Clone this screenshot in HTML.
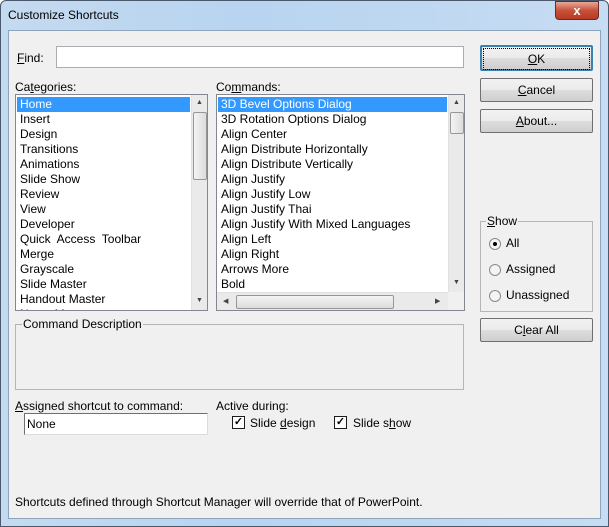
<!DOCTYPE html>
<html><head><style>
*{box-sizing:border-box;margin:0;padding:0}
body{width:609px;height:527px;overflow:hidden;background:#fff;font-family:"Liberation Sans",sans-serif;font-size:12px;color:#000;position:relative}
.frame{position:absolute;left:0;top:0;width:609px;height:527px;background:linear-gradient(90deg,#c4daf0,#b8d4f0 40%,#c6dcf2);border:1px solid #4a5a6c;border-radius:6px 6px 0 0}
.client{position:absolute;left:8px;top:30px;width:593px;height:489px;background:#f0f0f0;border:1px solid #8ea4bc}
.title{position:absolute;left:8px;top:8px;font-size:12px}
.close{position:absolute;left:555px;top:1px;width:44px;height:19px;border:1px solid #6a2a22;border-radius:0 0 4px 4px;background:linear-gradient(#e8a898,#c8503a 50%,#b83a22);color:#fff;font-weight:bold;text-align:center;font-size:13px;line-height:17px}
.a{position:absolute;white-space:nowrap}
.inp{position:absolute;background:#fff;border:1px solid #abadb3}
.btn{position:absolute;border:1px solid #707070;border-radius:2px;background:linear-gradient(#f2f2f2,#ebebeb 50%,#dddddd 51%,#cfcfcf);text-align:center;line-height:22px}
.list{position:absolute;background:#fff;border:1px solid #828790;overflow:hidden}
.it{height:15px;line-height:15px;padding-left:3px;white-space:nowrap}
.sel{background:#3399ff;color:#fff}
.vs{position:absolute;background:#eaeaea;border-left:1px solid #e0e0e0}
.thumb{position:absolute;background:linear-gradient(90deg,#f4f4f4,#dcdcdc);border:1px solid #979797;border-radius:2px}
.grp{position:absolute;border:1px solid #b5b5b5}
.lg{position:absolute;background:#f0f0f0;padding:0 1px;top:-8px}
.cb{position:absolute;width:13px;height:13px;border:1px solid #1c1c1c;background:#fff;font-size:11px;line-height:11px;text-align:center;font-weight:bold}
.rd{position:absolute;width:12px;height:12px;border:1px solid #8a8a8a;border-radius:50%;background:#f4f4f4}
u{text-decoration:underline}
.ar{position:absolute;font-size:7px;color:#444}
</style></head><body>
<div class="frame"></div>
<div class="title">Customize Shortcuts</div>
<div class="close">x</div>
<div class="client"></div>

<div class="a" style="left:17px;top:51px"><u>F</u>ind:</div>
<div class="inp" style="left:56px;top:46px;width:408px;height:22px"></div>

<div class="btn" style="left:480px;top:45px;width:113px;height:26px;border:2px solid #3c7fb1;line-height:20px"><span style="border:1px dotted #000;display:block;margin:1px;"><u>O</u>K</span></div>
<div class="btn" style="left:480px;top:78px;width:113px;height:24px"><u>C</u>ancel</div>
<div class="btn" style="left:480px;top:109px;width:113px;height:24px"><u>A</u>bout...</div>

<div class="a" style="left:15px;top:80px">Ca<u>t</u>egories:</div>
<div class="list" style="left:15px;top:94px;width:193px;height:217px">
<div style="padding-top:2px;padding-left:1px">
<div class="it sel" style="width:173px">Home</div>
<div class="it">Insert</div><div class="it">Design</div><div class="it">Transitions</div><div class="it">Animations</div><div class="it">Slide Show</div><div class="it">Review</div><div class="it">View</div><div class="it">Developer</div><div class="it">Quick&nbsp; Access&nbsp; Toolbar</div><div class="it">Merge</div><div class="it">Grayscale</div><div class="it">Slide Master</div><div class="it">Handout Master</div><div class="it">Notes Master</div>
</div>
<div class="vs" style="left:175px;top:0;width:16px;height:215px">
<div class="ar" style="left:4px;top:4px">▲</div>
<div class="thumb" style="left:1px;top:17px;width:14px;height:68px"></div>
<div class="ar" style="left:4px;top:202px">▼</div>
</div>
</div>

<div class="a" style="left:216px;top:80px">Co<u>m</u>mands:</div>
<div class="list" style="left:216px;top:94px;width:249px;height:217px">
<div style="padding-top:2px;padding-left:1px">
<div class="it sel" style="width:229px">3D Bevel Options Dialog</div>
<div class="it">3D Rotation Options Dialog</div><div class="it">Align Center</div><div class="it">Align Distribute Horizontally</div><div class="it">Align Distribute Vertically</div><div class="it">Align Justify</div><div class="it">Align Justify Low</div><div class="it">Align Justify Thai</div><div class="it">Align Justify With Mixed Languages</div><div class="it">Align Left</div><div class="it">Align Right</div><div class="it">Arrows More</div><div class="it">Bold</div>
</div>
<div class="vs" style="left:231px;top:0;width:16px;height:197px">
<div class="ar" style="left:4px;top:4px">▲</div>
<div class="thumb" style="left:1px;top:17px;width:14px;height:22px"></div>
<div class="ar" style="left:4px;top:184px">▼</div>
</div>
<div class="vs" style="left:0;top:197px;width:231px;height:18px;border-left:0;border-top:1px solid #e0e0e0">
<div class="ar" style="left:6px;top:4px">◀</div>
<div class="thumb" style="left:19px;top:2px;width:158px;height:14px;background:linear-gradient(#f4f4f4,#dcdcdc)"></div>
<div class="ar" style="left:218px;top:4px">▶</div>
</div>
<div style="position:absolute;left:231px;top:197px;width:16px;height:18px;background:#f0f0f0"></div>
</div>

<div class="grp" style="left:480px;top:221px;width:113px;height:91px">
<div class="lg" style="left:5px"><u>S</u>how</div>
<div class="rd" style="left:8px;top:16px"><div style="position:absolute;left:3px;top:3px;width:4px;height:4px;border-radius:50%;background:#000"></div></div>
<div class="a" style="left:25px;top:14px">All</div>
<div class="rd" style="left:8px;top:42px"></div>
<div class="a" style="left:25px;top:40px">Assigned</div>
<div class="rd" style="left:8px;top:68px"></div>
<div class="a" style="left:25px;top:66px">Unassigned</div>
</div>
<div class="btn" style="left:480px;top:318px;width:113px;height:24px">C<u>l</u>ear All</div>

<div class="grp" style="left:15px;top:324px;width:449px;height:66px">
<div class="lg" style="left:6px">Command Description</div>
</div>

<div class="a" style="left:15px;top:399px"><u>A</u>ssigned shortcut to command:</div>
<div class="inp" style="left:24px;top:413px;width:184px;height:22px;border-color:#707070 #dcdcdc #dcdcdc #707070"><div style="padding:3px 2px">None</div></div>

<div class="a" style="left:216px;top:399px">Active during:</div>
<div class="cb" style="left:232px;top:416px">✓</div>
<div class="a" style="left:250px;top:416px">Slide <u>d</u>esign</div>
<div class="cb" style="left:334px;top:416px">✓</div>
<div class="a" style="left:353px;top:416px">Slide s<u>h</u>ow</div>

<div class="a" style="left:15px;top:495px">Shortcuts defined through Shortcut Manager will override that of PowerPoint.</div>
</body></html>
